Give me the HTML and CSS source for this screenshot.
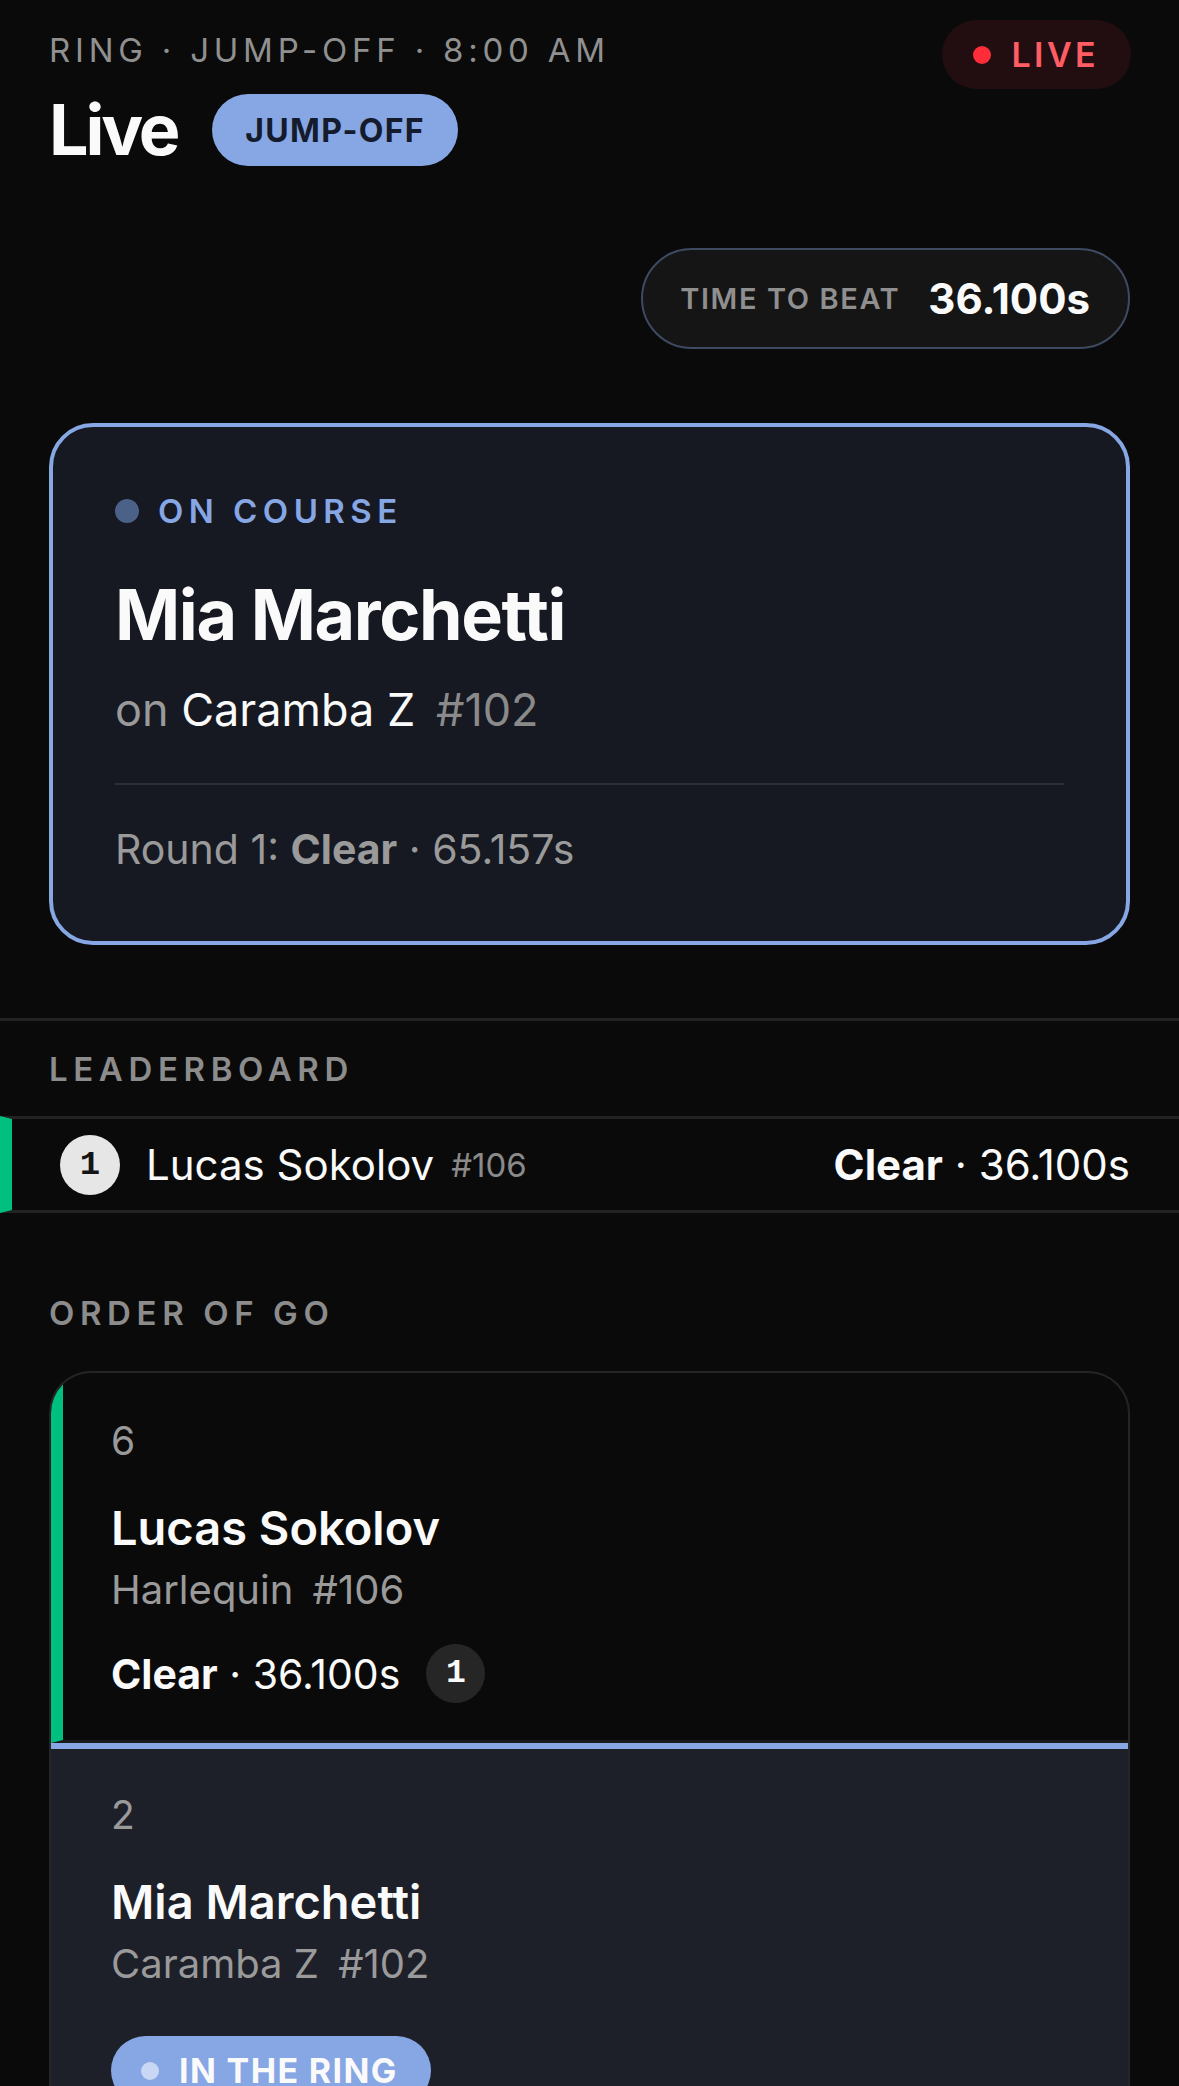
FILE: index.html
```html
<!DOCTYPE html>
<html lang="en">
<head>
  <meta charset="UTF-8">
  <title>Live</title>
  <link rel="stylesheet" href="styles.css">
</head>
<body>
  <div class="screen">
    <header class="top">
      <div class="top-left">
        <div class="eyebrow">RING · JUMP-OFF · 8:00 AM</div>
        <div class="title-row">
          <h1>Live</h1>
          <span class="round-tag">JUMP-OFF</span>
        </div>
      </div>
      <span class="live-pill"><span class="live-dot"></span>LIVE</span>
    </header>

    <div class="beat-row">
      <div class="beat">
        <span class="beat-label">TIME TO BEAT</span>
        <span class="beat-time">36.100s</span>
      </div>
    </div>

    <section class="on-course">
      <div class="status"><span class="status-dot"></span>ON COURSE</div>
      <div class="rider">Mia Marchetti</div>
      <div class="horse"><span class="muted">on</span> Caramba Z <span class="num">#102</span></div>
      <div class="divider"></div>
      <div class="prev-round">Round 1: <b>Clear</b> · 65.157s</div>
    </section>

    <section class="board">
      <div class="section-label">LEADERBOARD</div>
      <div class="board-row">
        <span class="rank">1</span>
        <span class="board-name">Lucas Sokolov</span>
        <span class="board-num">#106</span>
        <span class="board-result"><b>Clear</b> · 36.100s</span>
      </div>
    </section>

    <section class="order">
      <div class="section-label">ORDER OF GO</div>
      <div class="order-list">
        <div class="go-item done">
          <div class="go-pos">6</div>
          <div class="go-rider">Lucas Sokolov</div>
          <div class="go-horse">Harlequin <span class="go-num">#106</span></div>
          <div class="go-result">
            <span><b>Clear</b> · 36.100s</span>
            <span class="go-rank">1</span>
          </div>
        </div>
        <div class="go-item current">
          <div class="go-pos">2</div>
          <div class="go-rider">Mia Marchetti</div>
          <div class="go-horse">Caramba Z <span class="go-num">#102</span></div>
          <span class="ring-pill"><span class="ring-dot"></span>IN THE RING</span>
        </div>
      </div>
    </section>
  </div>
</body>
</html>
```

FILE: styles.css
```css
body {
  margin: 0;
  background-color: #0a0a0a;
  color: #fafafa;
  font-family: Inter, "Noto Sans", sans-serif;
}
.screen {
  height: 2086px;
  overflow: hidden;
}

/* header */
.top {
  display: flex;
  justify-content: space-between;
  align-items: flex-start;
  padding: 20px 48px 0 49px;
}
.eyebrow {
  margin-top: 10px;
  font-size: 33px;
  line-height: 40px;
  letter-spacing: 0.145em;
  color: #909090;
}
.title-row {
  display: flex;
  align-items: center;
  gap: 35px;
  margin-top: 24px;
}
h1 {
  margin: 0;
  font-size: 70px;
  line-height: 72px;
  font-weight: 700;
  letter-spacing: -0.045em;
}
.round-tag {
  display: flex;
  align-items: center;
  height: 72px;
  padding: 0 33px;
  border-radius: 36px;
  background-color: #86a6e4;
  color: #131b2c;
  font-size: 32px;
  font-weight: 700;
  letter-spacing: 0.04em;
}
.live-pill {
  display: flex;
  align-items: center;
  gap: 20px;
  height: 69px;
  padding: 0 32px 0 31px;
  border-radius: 35px;
  background-color: #220e10;
  color: #ff5c64;
  font-size: 34px;
  font-weight: 600;
  letter-spacing: 0.1em;
}
.live-dot {
  width: 18px;
  height: 18px;
  border-radius: 50%;
  background-color: #ff2d3a;
}

/* time to beat */
.beat-row {
  display: flex;
  justify-content: flex-end;
  padding: 0 49px;
  margin-top: 82px;
}
.beat {
  display: flex;
  align-items: center;
  gap: 28px;
  height: 97px;
  padding: 0 38px 0 37px;
  border: 2px solid #3e4a62;
  border-radius: 51px;
  background-color: #151515;
}
.beat-label {
  font-size: 29px;
  font-weight: 600;
  letter-spacing: 0.055em;
  color: #8f8f8f;
}
.beat-time {
  font-size: 42px;
  font-weight: 700;
}

/* on course card */
.on-course {
  margin: 74px 49px 0;
  padding: 64px 62px 68px;
  border: 4px solid #86a6e4;
  border-radius: 44px;
  background-color: #161922;
}
.status {
  display: flex;
  align-items: center;
  gap: 19px;
  font-size: 33px;
  line-height: 40px;
  font-weight: 600;
  letter-spacing: 0.165em;
  color: #86a6e4;
}
.status-dot {
  width: 24px;
  height: 24px;
  border-radius: 50%;
  background-color: #4b6187;
}
.rider {
  margin-top: 42px;
  font-size: 70px;
  line-height: 84px;
  font-weight: 700;
  letter-spacing: -0.02em;
}
.horse {
  margin-top: 24px;
  font-size: 45px;
  line-height: 58px;
}
.muted {
  color: #9a9a9a;
}
.horse .num {
  margin-left: 8px;
  color: #8a8a8a;
}
.divider {
  height: 2px;
  margin-top: 44px;
  background-color: #282e3a;
}
.prev-round {
  margin-top: 41px;
  font-size: 41px;
  line-height: 47px;
  color: #9a9a9a;
}
.prev-round b {
  font-weight: 700;
}

/* leaderboard */
.board {
  margin-top: 73px;
  border-top: 3px solid #232323;
}
.section-label {
  padding: 28px 49px 27px;
  font-size: 33px;
  line-height: 40px;
  font-weight: 600;
  letter-spacing: 0.17em;
  color: #8c8c8c;
}
.board-row {
  display: flex;
  align-items: center;
  height: 91px;
  padding: 0 49px 0 48px;
  border-top: 3px solid #232323;
  border-bottom: 3px solid #232323;
  border-left: 12px solid #00c07f;
}
.rank {
  display: flex;
  align-items: center;
  justify-content: center;
  width: 60px;
  height: 60px;
  border-radius: 50%;
  background-color: #e6e6e6;
  color: #141414;
  font-family: "Liberation Mono", "DejaVu Sans Mono", monospace;
  font-size: 34px;
  font-weight: 700;
}
.board-name {
  margin-left: 26px;
  font-size: 42px;
}
.board-num {
  margin-left: 17px;
  font-size: 33px;
  color: #8a8a8a;
}
.board-result {
  margin-left: auto;
  font-size: 42px;
}

/* order of go */
.order {
  margin-top: 80px;
}
.order .section-label {
  padding: 0 49px;
}
.order-list {
  margin: 38px 49px 0;
  border: 2px solid #252525;
  border-bottom: none;
  border-radius: 42px 42px 0 0;
  overflow: hidden;
}
.go-item {
  padding: 44px 48px 37px;
}
.go-item.done {
  border-left: 12px solid #00c07f;
  border-bottom: 3px solid #1a1a1a;
}
.go-item.current {
  padding: 42px 60px 60px;
  border-top: 6px solid #86a6e4;
  background-color: #1e2029;
}
.go-pos {
  font-size: 39px;
  line-height: 47px;
  color: #9a9a9a;
}
.go-rider {
  margin-top: 36px;
  font-size: 47px;
  line-height: 56px;
  font-weight: 600;
}
.go-horse {
  margin-top: 9px;
  font-size: 40px;
  line-height: 50px;
  color: #9a9a9a;
}
.go-num {
  margin-left: 8px;
}
.go-result {
  display: flex;
  align-items: center;
  gap: 26px;
  margin-top: 29px;
  font-size: 41px;
}
.go-rank {
  display: flex;
  align-items: center;
  justify-content: center;
  width: 59px;
  height: 59px;
  border-radius: 50%;
  background-color: #262626;
  font-family: "Liberation Mono", "DejaVu Sans Mono", monospace;
  font-size: 33px;
  font-weight: 700;
}
.ring-pill {
  display: inline-flex;
  align-items: center;
  gap: 20px;
  height: 69px;
  margin-top: 47px;
  padding: 0 33px 0 30px;
  border-radius: 35px;
  background-color: #86a6e4;
  font-size: 34px;
  font-weight: 700;
  letter-spacing: 0.04em;
}
.ring-dot {
  width: 18px;
  height: 18px;
  border-radius: 50%;
  background-color: #c9d7f5;
}
```
